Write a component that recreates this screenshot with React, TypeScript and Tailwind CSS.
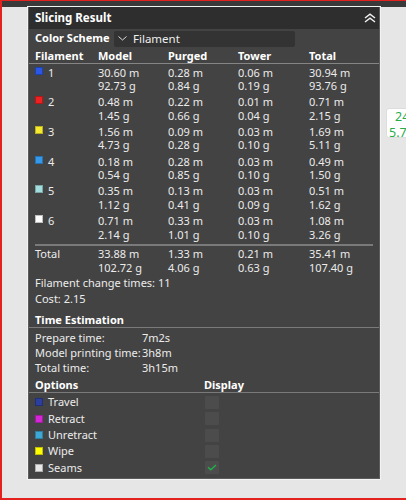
import React from "react";

const filaments = [
  { id: "1", color: "#2a57e6", model: ["30.60 m", "92.73 g"], purged: ["0.28 m", "0.84 g"], tower: ["0.06 m", "0.19 g"], total: ["30.94 m", "93.76 g"] },
  { id: "2", color: "#ee2020", model: ["0.48 m", "1.45 g"], purged: ["0.22 m", "0.66 g"], tower: ["0.01 m", "0.04 g"], total: ["0.71 m", "2.15 g"] },
  { id: "3", color: "#f6ea2c", model: ["1.56 m", "4.73 g"], purged: ["0.09 m", "0.28 g"], tower: ["0.03 m", "0.10 g"], total: ["1.69 m", "5.11 g"] },
  { id: "4", color: "#3498ec", model: ["0.18 m", "0.54 g"], purged: ["0.28 m", "0.85 g"], tower: ["0.03 m", "0.10 g"], total: ["0.49 m", "1.50 g"] },
  { id: "5", color: "#a3dede", model: ["0.35 m", "1.12 g"], purged: ["0.13 m", "0.41 g"], tower: ["0.03 m", "0.09 g"], total: ["0.51 m", "1.62 g"] },
  { id: "6", color: "#ffffff", model: ["0.71 m", "2.14 g"], purged: ["0.33 m", "1.01 g"], tower: ["0.03 m", "0.10 g"], total: ["1.08 m", "3.26 g"] },
];

const options = [
  { name: "Travel", color: "#2d3f9e", checked: false },
  { name: "Retract", color: "#d526d6", checked: false },
  { name: "Unretract", color: "#3ea8d4", checked: false },
  { name: "Wipe", color: "#ffff00", checked: false },
  { name: "Seams", color: "#e8e8e8", checked: true },
];

const cols = "grid grid-cols-[63px_70px_70px_71px_1fr]";

function Swatch({ color }: { color: string }) {
  return <span className="w-[8px] h-[8px] border border-black/25 shrink-0" style={{ backgroundColor: color }} />;
}

function Pair({ v }: { v: string[] }) {
  return (
    <div className="flex flex-col">
      <span className="leading-[13.6px]">{v[0]}</span>
      <span className="leading-[13.6px]">{v[1]}</span>
    </div>
  );
}

function FilamentTable() {
  return (
    <>
      <div className={`${cols} h-[15px] items-center px-[6px] font-bold text-white`}>
        <span>Filament</span>
        <span>Model</span>
        <span>Purged</span>
        <span>Tower</span>
        <span>Total</span>
      </div>
      <div className="h-[1px] bg-[#858585]" />
      <div className="flex flex-col">
        {filaments.map((f) => (
          <div key={f.id} className={`${cols} h-[29.7px] pt-[1.5px] px-[6px]`}>
            <div className="flex items-start gap-[5px] h-[13.6px]">
              <span className="mt-[1px] flex">
                <Swatch color={f.color} />
              </span>
              <span className="leading-[13.6px]">{f.id}</span>
            </div>
            <Pair v={f.model} />
            <Pair v={f.purged} />
            <Pair v={f.tower} />
            <Pair v={f.total} />
          </div>
        ))}
      </div>
      <div className="mx-[6px] mt-[1.8px] h-[2px] bg-[#7a7a7a]" />
      <div className={`${cols} pt-[1px] px-[6px]`}>
        <span className="leading-[13.6px]">Total</span>
        <Pair v={["33.88 m", "102.72 g"]} />
        <Pair v={["1.33 m", "4.06 g"]} />
        <Pair v={["0.21 m", "0.63 g"]} />
        <Pair v={["35.41 m", "107.40 g"]} />
      </div>
      <div className="px-[6px] pt-[1px] flex flex-col">
        <span className="leading-[16px]">Filament change times: 11</span>
        <span className="leading-[16px]">Cost: 2.15</span>
      </div>
    </>
  );
}

function TimeEstimation() {
  const rows = [
    ["Prepare time:", "7m2s"],
    ["Model printing time:", "3h8m"],
    ["Total time:", "3h15m"],
  ];
  return (
    <>
      <div className="h-[20px] pt-[6px] px-[6px] font-bold text-white leading-[14px]">Time Estimation</div>
      <div className="h-[1px] bg-[#7a7a7a]" />
      <div className="pt-[1.5px] px-[6px] flex flex-col">
        {rows.map(([k, v]) => (
          <div key={k} className="grid grid-cols-[107px_1fr] leading-[15px]">
            <span>{k}</span>
            <span>{v}</span>
          </div>
        ))}
      </div>
    </>
  );
}

function Options() {
  return (
    <>
      <div className="grid grid-cols-[169px_1fr] pt-[3.5px] px-[6px] leading-[14px] font-bold text-white">
        <span>Options</span>
        <span>Display</span>
      </div>
      <div className="h-[1px] bg-[#7a7a7a]" />
      <div className="pt-[1.2px] px-[6px] flex flex-col">
        {options.map((o) => (
          <div key={o.name} className="grid grid-cols-[169px_1fr] h-[16.3px] items-center">
            <div className="flex items-center gap-[5px]">
              <Swatch color={o.color} />
              <span className="leading-[14px]">{o.name}</span>
            </div>
            <div className="ml-[1px] w-[14px] h-[13px] bg-[#4c4c4c] rounded-[1px] flex items-center justify-center">
              {o.checked && (
                <svg width="10" height="7" viewBox="0 0 10 7" fill="none">
                  <path d="M1 3.2 L3.8 5.8 L9 1" stroke="#1fb24a" strokeWidth="1.4" />
                </svg>
              )}
            </div>
          </div>
        ))}
      </div>
    </>
  );
}

function Panel() {
  return (
    <div className="w-[352px] h-[472px] flex flex-col border-x border-b border-[#5c5c5c] shadow-[0_0_0_1px_#f3f3f3] text-[11px] text-[#ececec]">
      <div className="h-[22px] shrink-0 bg-[#2e2e2e] flex items-center justify-between pl-[6px] pr-[3px]">
        <span className="font-bold text-[11.5px] text-white">Slicing Result</span>
        <svg width="12" height="10" viewBox="0 0 12 10" fill="none" className="mr-[0px]">
          <path d="M1 5 L6 1.2 L11 5" stroke="#f2f2f2" strokeWidth="1.4" />
          <path d="M1 9 L6 5.2 L11 9" stroke="#f2f2f2" strokeWidth="1.4" />
        </svg>
      </div>
      <div className="flex-1 bg-[#434343] flex flex-col">
        <div className="h-[19px] flex items-center px-[6px]">
          <span className="font-bold text-white w-[79px]">Color Scheme</span>
          <div className="w-[181px] h-[16px] bg-[#333333] rounded-[2px] flex items-center pl-[4px] gap-[6px]">
            <svg width="9" height="5" viewBox="0 0 9 5" fill="none">
              <path d="M0.5 0.5 L4.5 4 L8.5 0.5" stroke="#dddddd" strokeWidth="1" />
            </svg>
            <span className="text-[#eeeeee] text-[11.5px]">Filament</span>
          </div>
        </div>
        <FilamentTable />
        <TimeEstimation />
        <Options />
      </div>
    </div>
  );
}

export default function App() {
  return (
    <div className="w-[406px] h-[500px] overflow-hidden bg-[#e6e6e6] border-l-2 border-b-2 border-[#e3211f] flex flex-col font-['Noto_Sans',sans-serif]">
      <div className="h-[1px] shrink-0 bg-[#e3211f]" />
      <div className="h-[6px] shrink-0 bg-[#3a3a3a]" />
      <div className="flex flex-1">
        <div className="w-[26px] shrink-0" />
        <Panel />
        <div className="flex-1 pt-[101px] pl-[6px] overflow-hidden">
          <div className="w-[40px] h-[30px] bg-white border border-[#dddddd] rounded-l-[3px] flex flex-col text-[12.5px] text-[#27ad48] leading-[16px] pt-[0px]">
            <span className="pl-[8px]">24</span>
            <span className="pl-[2px]">5.7</span>
          </div>
        </div>
      </div>
    </div>
  );
}
